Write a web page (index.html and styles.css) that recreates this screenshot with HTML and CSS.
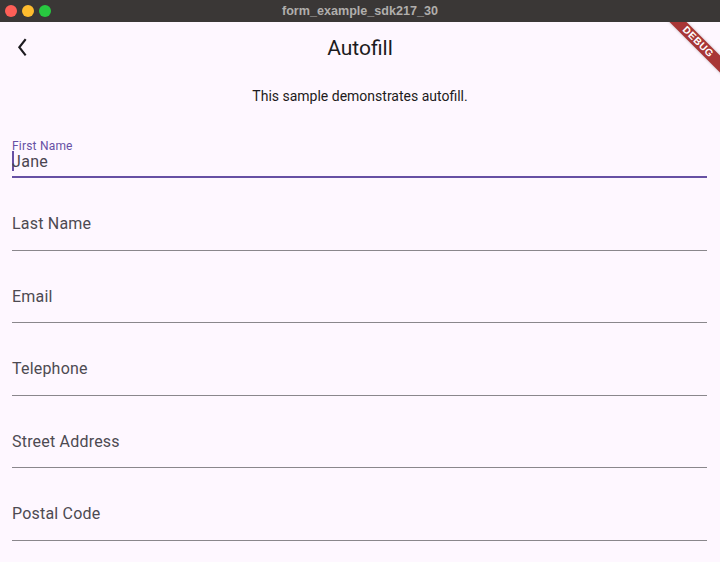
FILE: index.html
```html
<!DOCTYPE html>
<html>
<head>
<meta charset="utf-8">
<link rel="stylesheet" href="styles.css">
</head>
<body>
<div class="window">
  <div class="titlebar">
    <div class="lights">
      <span class="light red"></span>
      <span class="light yellow"></span>
      <span class="light green"></span>
    </div>
    <div class="wintitle">form_example_sdk217_30</div>
    <div></div>
  </div>
  <div class="app">
    <div class="appbar">
      <div class="back">
        <svg width="24" height="24" viewBox="0 0 24 24"><path d="M11 4 L5.3 11.25 L11 18.5" fill="none" stroke="#1d1b20" stroke-width="2.1" stroke-linecap="square" stroke-linejoin="miter"/></svg>
      </div>
      <div class="title">Autofill</div>
      <div></div>
    </div>
    <p class="subtitle">This sample demonstrates autofill.</p>
    <div class="form">
      <div class="field focused">
        <div class="float-label">First Name</div>
        <div class="input"><span class="cursor"></span>Jane</div>
      </div>
      <div class="field"><div class="label">Last Name</div></div>
      <div class="field"><div class="label">Email</div></div>
      <div class="field"><div class="label">Telephone</div></div>
      <div class="field"><div class="label">Street Address</div></div>
      <div class="field"><div class="label">Postal Code</div></div>
    </div>
    <div class="debug"><span>DEBUG</span></div>
  </div>
</div>
</body>
</html>
```

FILE: styles.css
```css
html, body {
  margin: 0;
  padding: 0;
}
body {
  width: 720px;
  height: 562px;
  overflow: hidden;
  background: #fef7ff;
  font-family: Roboto, "Liberation Sans", sans-serif;
}
.window {
  width: 720px;
  height: 562px;
  display: flex;
  flex-direction: column;
}
.titlebar {
  height: 22px;
  flex: none;
  background: #3a3736;
  display: grid;
  grid-template-columns: 1fr auto 1fr;
  align-items: center;
}
.lights {
  display: flex;
  gap: 5px;
  padding-left: 5px;
}
.light {
  width: 12px;
  height: 12px;
  border-radius: 50%;
}
.red { background: #fe5f57; }
.yellow { background: #febc2e; }
.green { background: #28c840; }
.wintitle {
  font-family: "Liberation Sans", Arial, sans-serif;
  font-weight: bold;
  font-size: 12.6px;
  color: #b0aeac;
}
.app {
  flex: 1;
  position: relative;
  overflow: hidden;
  background: #fef7ff;
}
.appbar {
  height: 56px;
  display: grid;
  grid-template-columns: 56px 1fr 56px;
  align-items: center;
}
.back {
  display: flex;
  align-items: center;
  padding-left: 14px;
  padding-bottom: 5px;
}
.back svg { display: block; }
.title {
  text-align: center;
  font-size: 21px;
  color: #1d1b20;
  line-height: 28px;
  padding-bottom: 5px;
}
.subtitle {
  margin: 8px 0 0;
  text-align: center;
  font-size: 14px;
  line-height: 20px;
  letter-spacing: 0;
  color: #1d1b20;
}
.form {
  padding: 0 13px 0 12px;
}
.field {
  padding-top: 34px;
  padding-bottom: 13.5px;
  border-bottom: 1px solid #8a878c;
}
.field.focused {
  padding-top: 35px;
  padding-bottom: 10px;
  border-bottom: 2px solid #6750a4;
}
.label {
  font-size: 16px;
  line-height: 24px;
  letter-spacing: 0.2px;
  color: #4d4a52;
}
.float-label {
  font-size: 12px;
  line-height: 10px;
  letter-spacing: 0.2px;
  color: #6750a4;
}
.input {
  height: 15px;
  font-size: 16px;
  line-height: 15px;
  letter-spacing: 0.3px;
  color: #4a4550;
}
.cursor {
  display: inline-block;
  width: 2px;
  height: 20px;
  margin-right: -2px;
  vertical-align: -4px;
  background: #6750a4;
}
.debug {
  position: absolute;
  top: 14px;
  right: -38px;
  width: 120px;
  height: 12px;
  background: #a83636;
  transform: rotate(45deg);
  display: flex;
  align-items: center;
  justify-content: center;
  box-shadow: 0 0 3px rgba(0,0,0,0.25);
}
.debug span {
  font-family: "Liberation Sans", Arial, sans-serif;
  font-weight: bold;
  font-size: 10px;
  line-height: 12px;
  color: #ffffff;
  letter-spacing: 0.6px;
}
```
